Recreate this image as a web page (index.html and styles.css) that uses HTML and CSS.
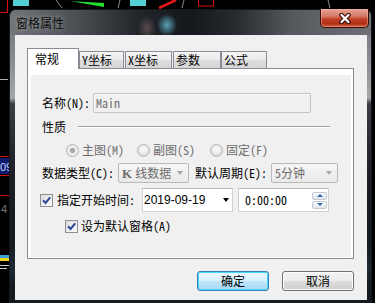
FILE: index.html
```html
<!DOCTYPE html>
<html lang="zh-CN">
<head>
<meta charset="UTF-8" />
<meta name="viewport" content="width=device-width, initial-scale=1" />
<title>窗格属性</title>
<link rel="stylesheet" href="styles.css">
</head>
<body>

<!-- chart behind the dialog -->
<svg class="chart" width="375" height="303" viewBox="0 0 375 303">
  <path d="M0 12.5 H7.5 V0" stroke="#e01010" stroke-width="1" fill="none" />
  <rect x="13" y="0" width="16" height="6" fill="#52d0d6" />
  <rect x="130" y="0" width="16" height="6" fill="#52d0d6" />
  <polygon points="51,0 104,3 104,7 70,1" fill="#22e02a" />
  <path d="M56 0 L62 8 M120 0 L118 8 M184 0 L182 8 M328 0 L330 8" stroke="#8a8a8a" stroke-width="1" />
  <path d="M159 8 L176 0" stroke="#e01818" stroke-width="2.5" />
  <rect x="198.5" y="-1" width="15" height="7" fill="none" stroke="#e01010" />
  <path d="M0 79.5 H8" stroke="#b0b0b0" />
  <path d="M0 156.5 H9 M0 175.5 H9 M0 195.5 H9" stroke="#d01010" />
  <rect x="0" y="158" width="9" height="16" fill="#0e1a6a" />
  <text x="0" y="171" class="chart-num">09</text>
  <text x="1" y="213" class="chart-dim">4</text>
  <rect x="0" y="255" width="9" height="3" fill="#3aa0d8" />
  <rect x="0" y="258" width="9" height="3" fill="#e8d820" />
  <path d="M0 265.5 H9 M0 268.5 H7" stroke="#d0d0d0" />
</svg>

<div class="window">
  <div class="titlebar">
    <span class="title">窗格属性</span>
    <button class="close">
      <svg width="14" height="11" viewBox="0 0 14 11">
        <path d="M3.5 2 L10.5 9 M10.5 2 L3.5 9" stroke="#3a1008" stroke-width="4.5" stroke-linecap="round" />
        <path d="M3.5 2 L10.5 9 M10.5 2 L3.5 9" stroke="#ffffff" stroke-width="2.2" stroke-linecap="round" />
      </svg>
    </button>
  </div>

  <div class="client">
    <div class="tabs">
      <div class="tab active">常规</div>
      <div class="tab tab-y">Y坐标</div>
      <div class="tab tab-x">X坐标</div>
      <div class="tab tab-p">参数</div>
      <div class="tab tab-f">公式</div>
    </div>

    <div class="page">
      <div class="page-body">
        <div class="row name-row">
          <label class="lbl-name">名称(N):</label>
          <div class="edit disabled">Main</div>
        </div>

        <div class="row group-row">
          <span>性质</span>
          <span class="etched"></span>
        </div>

        <div class="row radio-row">
          <span class="radio r1 checked"><i></i>主图(M)</span>
          <span class="radio r2"><i></i>副图(S)</span>
          <span class="radio"><i></i>固定(F)</span>
        </div>

        <div class="row data-row">
          <label class="lbl-combo">数据类型(C):</label>
          <div class="combo combo-type"><span><em class="k">K</em>线数据</span><b></b></div>
          <label class="lbl-combo lbl-period">默认周期(E):</label>
          <div class="combo combo-period"><span>5分钟</span><b></b></div>
        </div>

        <div class="row check-row">
          <span class="check">
            <svg width="11" height="11" viewBox="0 0 11 11"><path d="M2 5.2 L4.6 8 L9.2 2.4" stroke="#2b4a9c" stroke-width="2" fill="none" /></svg>
          </span>
          <span class="check-text">指定开始时间:</span>
          <div class="field date-field"><span>2019-09-19</span><b></b></div>
          <div class="field time-field">
            <span>0:00:00</span>
            <div class="spin">
              <div class="spin-btn up"><b></b></div>
              <div class="spin-btn down"><b></b></div>
            </div>
          </div>
        </div>

        <div class="row check2-row">
          <span class="check">
            <svg width="11" height="11" viewBox="0 0 11 11"><path d="M2 5.2 L4.6 8 L9.2 2.4" stroke="#2b4a9c" stroke-width="2" fill="none" /></svg>
          </span>
          <span>设为默认窗格(A)</span>
        </div>
      </div>
    </div>

    <div class="buttons">
      <button class="btn btn-default">确定</button>
      <button class="btn">取消</button>
    </div>
  </div>
</div>

</body>
</html>
```

FILE: styles.css
```css
body {
  margin: 0;
  padding: 0;
  width: 375px;
  height: 303px;
  overflow: hidden;
  background: #000;
  font: 12px/14px "Noto Sans Mono CJK SC", "Noto Sans CJK SC", sans-serif;
  color: #000;
}
/* chart in the background */
.chart {
  position: absolute;
  left: 0;
  top: 0;
}
.chart-num {
  font: 11px "Liberation Sans", sans-serif;
  fill: #c8d0ff;
}
.chart-dim {
  font: 11px "Liberation Sans", sans-serif;
  fill: #777;
}

/* window frame */
.window {
  position: relative;
  margin: 9px 0 0 9px;
  width: 363px;
  height: 294px;
  box-sizing: border-box;
  border: 1px solid #15181b;
  border-bottom: none;
  border-radius: 7px 7px 0 0;
  padding: 0 4px 0 5px;
  background: linear-gradient(180deg, #6c7074 0, #8b8f93 18%, #a3a7aa 30%, #3a3e43 32%, #1c2026 55%, #151a20 80%, #1d2a36 88%, #151a20 94%);
}
.titlebar {
  height: 25px;
  display: flex;
  justify-content: space-between;
  align-items: flex-start;
  margin: 0 -4px 0 -5px;
  padding: 0 4px 0 5px;
  border-radius: 6px 6px 0 0;
  background:
    radial-gradient(ellipse 10px 11px at 157px 15px, rgba(110, 205, 230, 0.75) 0, rgba(110, 205, 230, 0.35) 55%, rgba(110, 205, 230, 0) 100%),
    radial-gradient(ellipse 9px 12px at 137px 18px, rgba(140, 110, 110, 0.55) 0, rgba(140, 110, 110, 0) 100%),
    linear-gradient(90deg, #73777b 0%, #4c5055 18%, #23272c 35%, #14181d 50%, #262a2f 62%, #55595e 78%, #6e7276 100%);
}
.title {
  padding: 6px 0 0 1px;
  color: #0a0a0a;
  text-shadow: 0 0 5px rgba(220, 225, 230, 0.55);
}
.close {
  margin: -1px -2px 0 0;
  width: 49px;
  height: 19px;
  padding: 0;
  border: 1px solid #3b0c04;
  border-top: none;
  border-radius: 0 0 5px 5px;
  background: linear-gradient(180deg, #e4a496 0%, #d67966 40%, #c2432a 55%, #b02e14 80%, #d06243 100%);
  box-shadow: inset 0 0 0 1px rgba(255, 190, 170, 0.45);
  display: flex;
  align-items: center;
  justify-content: center;
}
.close svg {
  display: block;
}

/* client area */
.client {
  width: 352px;
  height: 265px;
  box-sizing: border-box;
  background: #f0f0f0;
  padding: 13px 0 0 12px;
}
.tabs {
  display: flex;
  align-items: flex-end;
  height: 21px;
  margin-bottom: -1px;
  position: relative;
  z-index: 1;
}
.tab {
  box-sizing: border-box;
  height: 17px;
  margin-bottom: 1px;
  border: 1px solid #898c95;
  border-bottom: none;
  background: linear-gradient(180deg, #f4f4f4 0%, #ebebeb 50%, #dedede 51%, #d6d6d6 100%);
  padding: 1px 0 0 2px;
}
.tab.active {
  width: 52px;
  height: 21px;
  margin-bottom: 0;
  background: #fff;
  padding: 3px 0 0 7px;
}
.tab-y { width: 45px; }
.tab-x { width: 47px; margin-left: 1px; }
.tab-p { width: 48px; margin-left: 1px; }
.tab-f { width: 46px; }

.page {
  width: 327px;
  height: 191px;
  box-sizing: border-box;
  border: 1px solid #898c95;
  background: #fff;
  padding: 6px 2px 1px 3px;
}
.page-body {
  height: 100%;
  box-sizing: border-box;
  background: #f0f0f0;
  padding: 18px 0 0 11px;
}
.row {
  display: flex;
  align-items: center;
}
.name-row {
  height: 20px;
}
.lbl-name {
  width: 51px;
}
.edit {
  box-sizing: border-box;
  width: 218px;
  height: 20px;
  border: 1px solid #c2c4c8;
  border-radius: 2px;
  box-shadow: inset 1px 1px 0 #fafafa;
  padding: 2px 0 0 2px;
}
.disabled {
  color: #6d6d6d;
}
.group-row {
  margin-top: 6px;
  height: 16px;
}
.etched {
  flex: 1;
  margin: 0 21px 0 12px;
  border-top: 1px solid #a0a0a0;
  border-bottom: 1px solid #fff;
}
.radio-row {
  margin-top: 8px;
  height: 14px;
  padding-left: 24px;
  color: #6d6d6d;
}
.radio {
  display: flex;
  align-items: center;
}
.r1 { width: 71px; }
.r2 { width: 73px; }
.radio i {
  width: 13px;
  height: 13px;
  box-sizing: border-box;
  border-radius: 50%;
  border: 1px solid #b6b6b6;
  background: radial-gradient(circle at 50% 40%, #fbfbfb 0, #ececec 4px, #d9d9d9 6px);
  margin-right: 3px;
}
.radio.checked i {
  background: radial-gradient(circle, #9d9d9d 0, #b4b4b4 2.5px, #eeeeee 3.2px, #f5f5f5 4px, #d6d6d6 6px);
}
.data-row {
  margin-top: 6px;
  height: 20px;
}
.lbl-combo {
  width: 76px;
}
.lbl-period {
  margin-left: 6px;
}
.combo {
  box-sizing: border-box;
  height: 20px;
  border: 1px solid #b9b9b9;
  border-radius: 2px;
  background: linear-gradient(180deg, #f6f6f6, #e9e9e9);
  color: #6d6d6d;
  padding-left: 3px;
  display: flex;
  align-items: center;
  justify-content: space-between;
}
.combo .k {
  font-style: normal;
  font-weight: bold;
  font-family: "Liberation Serif", serif;
  font-size: 13px;
  margin-right: 3px;
}
.combo b {
  width: 0;
  height: 0;
  border-left: 3.5px solid transparent;
  border-right: 3.5px solid transparent;
  border-top: 4px solid #a8a8a8;
  margin-right: 5px;
}
.combo-type { width: 71px; }
.combo-period { width: 67px; }

.check-row {
  margin-top: 5px;
  height: 24px;
  margin-left: -2px;
}
.check {
  box-sizing: border-box;
  width: 13px;
  height: 13px;
  border: 1px solid #8e8f8f;
  background: linear-gradient(135deg, #dcdcdc, #fbfbfb);
  display: flex;
  align-items: center;
  justify-content: center;
  margin-right: 4px;
}
.check svg {
  display: block;
}
.check-text {
  width: 85px;
}
.field {
  box-sizing: border-box;
  height: 24px;
  width: 91px;
  border: 1px solid #cfd2d7;
  border-top-color: #b9bcc2;
  background: #fff;
  display: flex;
  align-items: center;
  justify-content: space-between;
}
.date-field {
  padding-left: 1px;
  font-family: "Liberation Sans", sans-serif;
}
.date-field b {
  width: 0;
  height: 0;
  border-left: 3.5px solid transparent;
  border-right: 3.5px solid transparent;
  border-top: 4px solid #000;
  margin-right: 3px;
}
.time-field {
  margin-left: 5px;
  padding-left: 6px;
}
.spin {
  display: flex;
  flex-direction: column;
  gap: 1px;
  margin-right: 1px;
}
.spin-btn {
  box-sizing: border-box;
  width: 15px;
  height: 8px;
  border: 1px solid #c3c9d3;
  border-radius: 2px;
  background: linear-gradient(180deg, #f8f9fb, #e1e6ee);
  display: flex;
  align-items: center;
  justify-content: center;
}
.spin-btn.up b {
  border-left: 3px solid transparent;
  border-right: 3px solid transparent;
  border-bottom: 3px solid #3b63a8;
}
.spin-btn.down b {
  border-left: 3px solid transparent;
  border-right: 3px solid transparent;
  border-top: 3px solid #3b63a8;
}
.check2-row {
  margin-top: 7px;
  height: 14px;
  padding-left: 23px;
}
.check2-row .check {
  margin-right: 3px;
}

/* dialog buttons */
.buttons {
  width: 327px;
  display: flex;
  justify-content: flex-end;
  gap: 13px;
  margin-top: 12px;
}
.btn {
  box-sizing: border-box;
  width: 72px;
  height: 20px;
  padding: 0;
  font: inherit;
  color: #000;
  border: 1px solid #707070;
  border-radius: 3px;
  background: linear-gradient(180deg, #f2f2f2 0%, #ebebeb 50%, #dddddd 51%, #cfcfcf 100%);
  box-shadow: inset 0 0 0 1px #fcfcfc;
}
.btn-default {
  border-color: #3c7fb1;
  background: linear-gradient(180deg, #eaf6fd 0%, #d9f0fc 50%, #bee6fd 51%, #a7d9f5 100%);
  box-shadow: inset 0 0 0 1px #48d8fb;
}
```
